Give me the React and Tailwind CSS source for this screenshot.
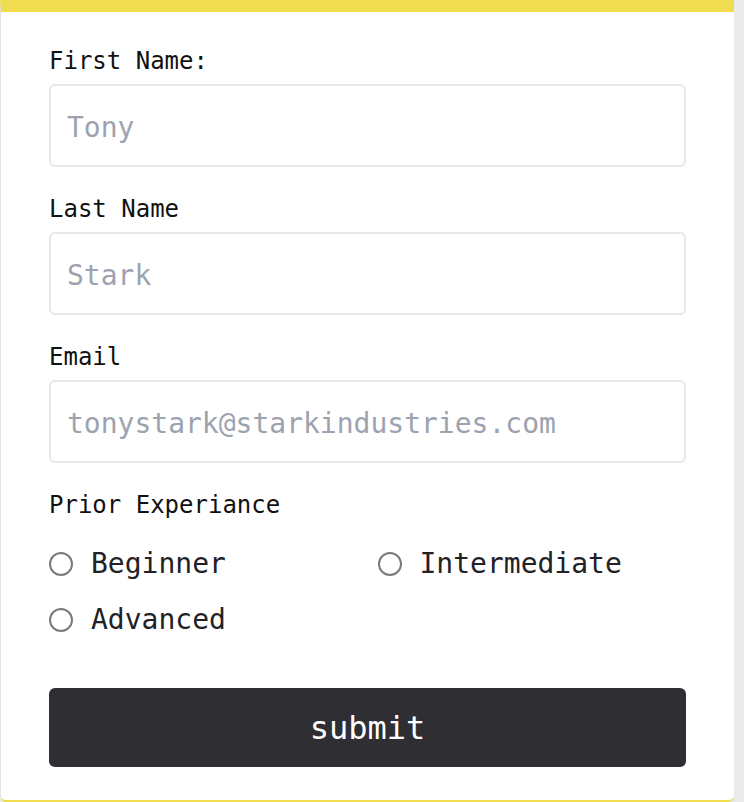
export default function App() {
  const mono = "font-['DejaVu_Sans_Mono','Liberation_Mono',monospace]";
  const fields = [
    { label: "First Name:", ph: "Tony" },
    { label: "Last Name", ph: "Stark" },
    { label: "Email", ph: "tonystark@starkindustries.com" },
  ];
  return (
    <div className={`min-h-[802px] bg-[#ebebeb] ${mono}`}>
      <div className="w-[734px] h-[802px] bg-white border-l border-l-[#e3e3e3] border-t-[12px] border-t-[#efdc4f] border-b-2 border-b-[#efdc4f] rounded-b-md px-12 pt-[33px] pb-[33px] flex flex-col">
        {fields.map((f, i) => (
          <div key={i} className="flex flex-col mb-[26px]">
            <label className="pt-[2px] text-[24px] leading-[28px] text-[#111111]">{f.label}</label>
            <input
              type="text"
              placeholder={f.ph}
              className="mt-[9px] h-[83px] w-full rounded-md border-2 border-[#e5e7eb] px-4 pt-1 text-[28px] text-[#111] placeholder:text-[#9ca3af] outline-none"
            />
          </div>
        ))}
        <div className="pt-[2px] text-[24px] leading-[28px] text-[#111111]">Prior Experiance</div>
        <div className="grid grid-cols-2 gap-x-5 gap-y-6 mt-[29px]">
          {["Beginner", "Intermediate", "Advanced"].map((r) => (
            <label key={r} className="flex items-center gap-[18px] h-8">
              <input
                type="radio"
                name="exp"
                className="appearance-none w-6 h-6 rounded-full border-2 border-[#7a7a7a] bg-white shrink-0"
              />
              <span className="text-[28px] leading-8 text-[#222226]">{r}</span>
            </label>
          ))}
        </div>
        <button className="mt-[52px] h-[80px] w-full rounded-md bg-[#2f2e33] text-white text-[32px]">
          submit
        </button>
      </div>
    </div>
  );
}
